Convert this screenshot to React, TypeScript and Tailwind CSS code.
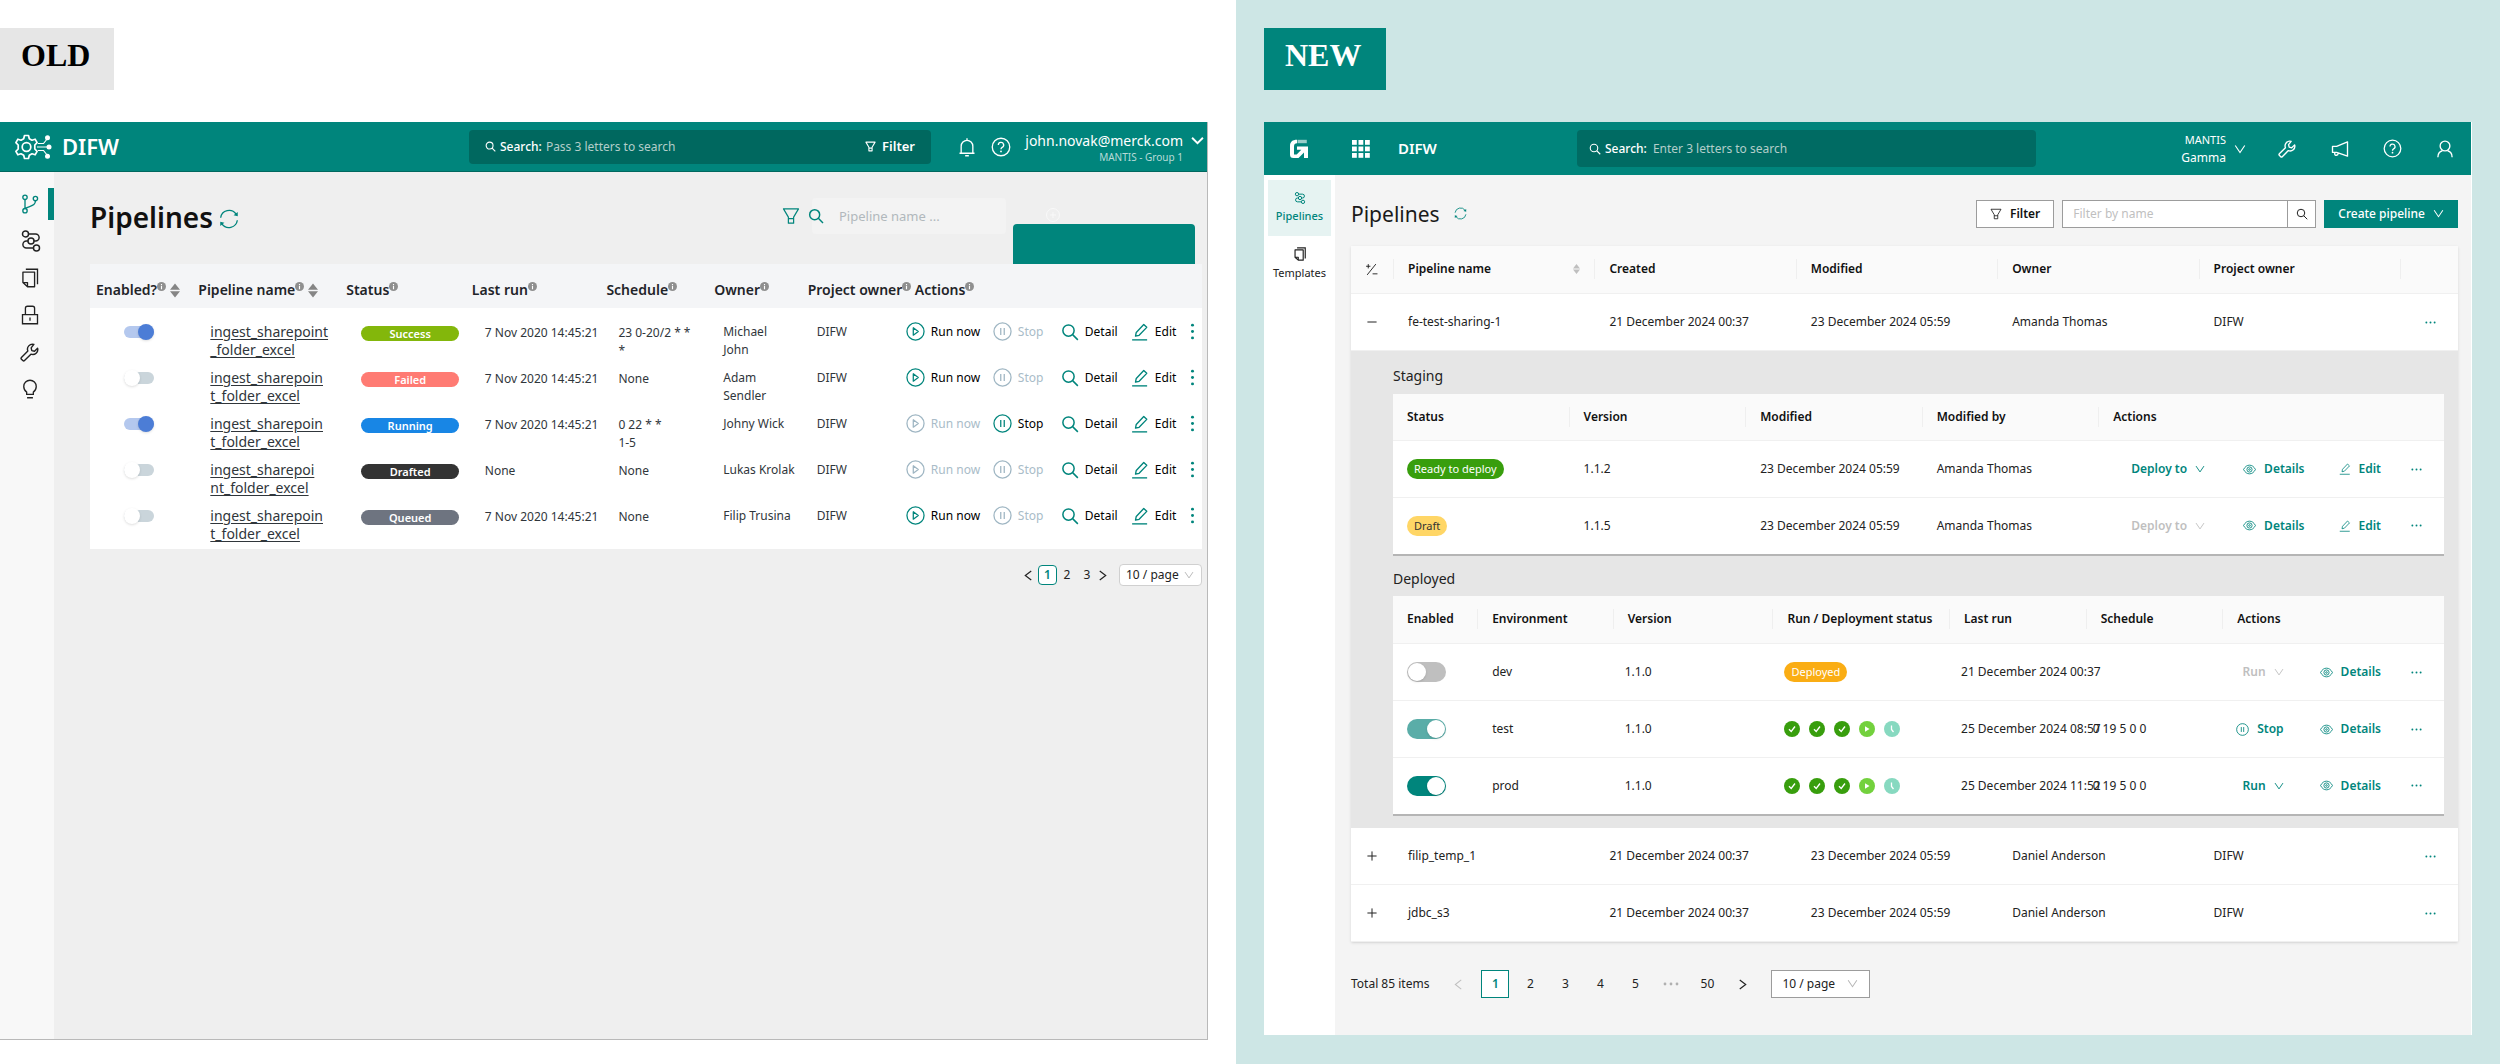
import React from "react";

type IconProps = {
  size?: string;
  className?: string;
  strokeWidth?: number;
  children: React.ReactNode;
};

const Icon = ({ size = "size-4", className = "", strokeWidth = 1.6, children }: IconProps) => (
  <svg
    viewBox="0 0 24 24"
    fill="none"
    stroke="currentColor"
    strokeWidth={strokeWidth}
    className={`shrink-0 ${size} ${className}`}
    aria-hidden="true"
  >
    {children}
  </svg>
);

type SizeProps = { size?: string; className?: string; strokeWidth?: number };

const SearchIcon = (p: SizeProps) => (
  <Icon {...p}>
    <circle cx="10" cy="10" r="7.5" />
    <path d="M15.5 15.5 22.5 22.5" />
  </Icon>
);

const FilterIcon = (p: SizeProps) => (
  <Icon {...p}>
    <path d="M2 2.5h20l-6.5 11v8h-7v-8z M8.5 15.5h7" strokeLinejoin="round" />
  </Icon>
);

const ChevronDown = ({ strokeWidth = 2.2, ...p }: SizeProps) => (
  <Icon strokeWidth={strokeWidth} {...p}>
    <path d="M2.5 5 12 19 21.5 5" />
  </Icon>
);

const RefreshIcon = (p: SizeProps) => (
  <Icon {...p}>
    <path d="M2 10.5A10.2 10.2 0 0 1 20.5 6.2M22 13.5A10.2 10.2 0 0 1 3.5 17.8" />
    <path d="M22.5 3.5v5.2l-5-1.2zM1.5 20.5v-5.2l5 1.2z" fill="currentColor" stroke="none" />
  </Icon>
);

const HelpIcon = (p: SizeProps) => (
  <Icon {...p}>
    <circle cx="12" cy="12" r="10.5" />
    <path d="M8.8 9.6a3.2 3.2 0 1 1 4.6 2.9c-1 .5-1.4 1-1.4 2.2" />
    <circle cx="12" cy="17.3" r="1.1" fill="currentColor" stroke="none" />
  </Icon>
);

const WrenchIcon = (p: SizeProps) => (
  <Icon {...p}>
    <path
      d="M17.5 1.8a6.3 6.3 0 0 0-7.6 8.4L1.8 18.3a1.5 1.5 0 0 0 0 2.1l1.8 1.8a1.5 1.5 0 0 0 2.1 0l8.1-8.1a6.3 6.3 0 0 0 8.4-7.6l-3.9 3.9-3.4-.8-.8-3.4z"
      strokeLinejoin="round"
    />
  </Icon>
);

const PenIcon = (p: SizeProps) => (
  <Icon {...p}>
    <path d="M1.5 22.5h20" />
    <path d="M6 17.5 7 12.6 17 2l4 3.8L10.8 16.4z" strokeLinejoin="round" />
  </Icon>
);

const EyeIcon = (p: SizeProps) => (
  <Icon {...p}>
    <path d="M1 12C4 6.5 7.5 4 12 4s8 2.5 11 8c-3 5.5-6.5 8-11 8S4 17.5 1 12z" />
    <circle cx="12" cy="12" r="4.8" />
    <circle cx="12" cy="12" r="1.5" />
  </Icon>
);

const PauseIcon = (p: SizeProps) => (
  <Icon {...p}>
    <circle cx="12" cy="12" r="10.8" />
    <path d="M9.8 7.5v9M14.2 7.5v9" />
  </Icon>
);

const PlayIcon = (p: SizeProps) => (
  <Icon {...p}>
    <circle cx="12" cy="12" r="10.8" />
    <path d="M9.2 7.3v9.4l6.3-4.7z" strokeLinejoin="round" />
  </Icon>
);

const FlowIcon = (p: SizeProps) => (
  <Icon {...p}>
    <circle cx="6" cy="4.3" r="3.3" />
    <circle cx="12" cy="12" r="3.3" />
    <circle cx="18" cy="19.7" r="3.3" />
    <path d="M9.3 4.3H17a3.8 3.8 0 0 1 0 7.7h-1.7M8.7 12H7a3.8 3.8 0 0 0 0 7.7h7.7" />
  </Icon>
);

const TemplateIcon = (p: SizeProps) => (
  <Icon {...p}>
    <path d="M7 1.5h14v18" />
    <path d="M3.5 5H17.5v17.5H9L3.5 17.5z M3.5 17.5H9v5" strokeLinejoin="round" />
  </Icon>
);

const DotsIcon = (p: SizeProps) => (
  <Icon {...p}>
    <g fill="currentColor" stroke="none">
      <circle cx="3" cy="12" r="2.1" />
      <circle cx="12" cy="12" r="2.1" />
      <circle cx="21" cy="12" r="2.1" />
    </g>
  </Icon>
);

const SortIcon = ({ className = "" }: { className?: string }) => (
  <svg viewBox="0 0 10 14" fill="currentColor" className={`shrink-0 ${className}`} aria-hidden="true">
    <path d="M5 0 10 6.3H0zM5 14 10 7.7H0z" />
  </svg>
);

const InfoMark = () => (
  <svg viewBox="0 0 12 12" className="mb-2 size-[9px] shrink-0" aria-hidden="true">
    <circle cx="6" cy="6" r="6" fill="#8f8f8f" />
    <path d="M6 2.5v1.5M6 5v4.5" stroke="#fff" strokeWidth="1.5" />
  </svg>
);

/* ---------- old app ---------- */

const statusColors: Record<string, string> = {
  Success: "bg-[#83b70b]",
  Failed: "bg-[#ff7b73]",
  Running: "bg-[#1886e5]",
  Drafted: "bg-[#333333]",
  Queued: "bg-[#6e7480]",
};

const oldRows = [
  { on: true, name: ["ingest_sharepoint", "_folder_excel"], status: "Success", lastRun: "7 Nov 2020 14:45:21", schedule: ["23 0-20/2 * *", "*"], owner: ["Michael", "John"], run: true, stop: false },
  { on: false, name: ["ingest_sharepoin", "t_folder_excel"], status: "Failed", lastRun: "7 Nov 2020 14:45:21", schedule: ["None"], owner: ["Adam", "Sendler"], run: true, stop: false },
  { on: true, name: ["ingest_sharepoin", "t_folder_excel"], status: "Running", lastRun: "7 Nov 2020 14:45:21", schedule: ["0 22 * *", "1-5"], owner: ["Johny Wick"], run: false, stop: true },
  { on: false, name: ["ingest_sharepoi", "nt_folder_excel"], status: "Drafted", lastRun: "None", schedule: ["None"], owner: ["Lukas Krolak"], run: false, stop: false },
  { on: false, name: ["ingest_sharepoin", "t_folder_excel"], status: "Queued", lastRun: "7 Nov 2020 14:45:21", schedule: ["None"], owner: ["Filip Trusina"], run: true, stop: false },
];

const Lines = ({ lines }: { lines: string[] }) => (
  <>
    {lines.map((line) => (
      <span key={line} className="block whitespace-nowrap">
        {line}
      </span>
    ))}
  </>
);

const OldHeader = () => (
  <header className="grid h-[50px] grid-cols-[469fr_462fr_276fr] items-center border-b border-[#00685f] bg-[#00857c] text-white">
    <div className="flex items-center gap-2.5 pl-[14px]">
      <svg viewBox="0 0 38 26" fill="none" stroke="currentColor" strokeWidth="1.7" className="h-[26px] w-[38px]" aria-hidden="true">
        <path d="M10.500 1.500h4l.8 3.200 2.700 1.500 3.100-1 2 3.500-2.300 2.300v4l2.300 2.300-2 3.500-3.100-1-2.700 1.500-.8 3.200h-4l-.8-3.200L7 19.800l-3.100 1-2-3.500L4.200 15v-4L1.900 8.700l2-3.500 3.100 1 2.700-1.500z" strokeLinejoin="round" />
        <circle cx="12.5" cy="13" r="4.3" />
        <path d="M24 9.500h5.500l4-5M23 13h12M24 16.500h5.500l4 5" strokeWidth="1.200" />
        <g fill="currentColor" stroke="none">
          <circle cx="33.5" cy="3.800" r="2.500" />
          <circle cx="35" cy="13" r="2.500" />
          <circle cx="33.5" cy="22.200" r="2.500" />
        </g>
      </svg>
      <span className="text-[22px] font-semibold">DIFW</span>
    </div>
    <div className="flex h-[34px] items-center rounded bg-[#00685f] px-4 text-xs">
      <SearchIcon size="size-[11px]" strokeWidth={2.4} />
      <label htmlFor="old-search" className="ml-1 font-medium">
        Search:
      </label>
      <input id="old-search" placeholder="Pass 3 letters to search" className="ml-1 min-w-0 flex-1 bg-transparent outline-none placeholder:text-[#b3ceca]" />
      <button className="flex items-center gap-1.5 text-[13px] font-semibold">
        <FilterIcon size="size-[11px]" strokeWidth={2.4} />
        Filter
      </button>
    </div>
    <div className="flex items-center justify-end pr-[3px]">
      <button aria-label="Notifications">
        <Icon size="size-5">
          <path d="M3 19.5h18M5 19.5V11a7 7 0 0 1 14 0v8.5M12 4V1.5M9.8 22.5h4.4" />
        </Icon>
      </button>
      <button aria-label="Help" className="ml-3.5">
        <HelpIcon size="size-5" />
      </button>
      <div className="ml-3.5 text-right">
        <p className="text-sm leading-5">john.novak@merck.com</p>
        <p className="text-[10px] leading-3 text-[#b8dbd8]">MANTIS - Group 1</p>
      </div>
      <button aria-label="Account menu" className="mb-3 ml-2">
        <Icon size="size-[13px]" strokeWidth={3.5}>
          <path d="M2 7l10 10L22 7" />
        </Icon>
      </button>
    </div>
  </header>
);

const OldSidebar = () => (
  <nav className="flex w-[54px] shrink-0 flex-col gap-[5px] bg-[#f8f8f8] pt-4 text-[#222]">
    <a href="#branches" aria-label="Pipelines" className="flex h-8 items-center border-r-[6px] border-[#00857c] pl-5 text-[#00857c]">
      <Icon size="size-5">
        <circle cx="6" cy="4" r="2.6" />
        <circle cx="6" cy="20" r="2.6" />
        <circle cx="18.5" cy="5.5" r="2.6" />
        <path d="M6 6.6v10.8M18.5 8.2c0 6-5 5.5-12.5 9" />
      </Icon>
    </a>
    <a href="#flows" aria-label="Flows" className="flex h-8 items-center pl-5">
      <FlowIcon size="size-[22px]" />
    </a>
    <a href="#templates" aria-label="Templates" className="flex h-8 items-center pl-5">
      <TemplateIcon size="size-5" />
    </a>
    <a href="#security" aria-label="Security" className="flex h-8 items-center pl-5">
      <Icon size="size-5">
        <path d="M3 11.500h18v11H3zM6.500 11.500V4q0-2.500 2.500-2.500h6q2.500 0 2.500 2.500v7.500M12 15v4" />
      </Icon>
    </a>
    <a href="#tools" aria-label="Tools" className="flex h-8 items-center pl-5">
      <WrenchIcon size="size-[19px]" strokeWidth={1.8} />
    </a>
    <a href="#tips" aria-label="Tips" className="flex h-8 items-center pl-5">
      <Icon size="size-5">
        <path d="M8 18.500v-2.800C5.500 14 4.500 11.500 4.500 9a7.500 7.500 0 0 1 15 0c0 2.500-1 5-3.500 6.700v2.800zM8.500 22.500h7" />
      </Icon>
    </a>
  </nav>
);

type OldActionProps = { icon: React.ReactNode; label: string; width: string; enabled?: boolean };

const OldAction = ({ icon, label, width, enabled = true }: OldActionProps) => (
  <button disabled={!enabled} className={`flex items-center gap-1.5 whitespace-nowrap ${width} ${enabled ? "text-[#00857c]" : "text-[#9fb6c3]"}`}>
    {icon}
    <span className={enabled ? "text-black" : "text-[#a9bcc8]"}>{label}</span>
  </button>
);

const OldTable = () => (
  <table className="w-full table-fixed bg-white text-left text-xs text-[#30363b]">
    <colgroup>
      <col className="w-[9.2%]" />
      <col className="w-[13.3%]" />
      <col className="w-[11.3%]" />
      <col className="w-[12.1%]" />
      <col className="w-[9.7%]" />
      <col className="w-[8.4%]" />
      <col className="w-[9.1%]" />
      <col />
    </colgroup>
    <thead className="bg-[#f4f5f7] text-sm text-[#1f2429]">
      <tr className="h-11">
        {["Enabled?", "Pipeline name", "Status", "Last run", "Schedule", "Owner", "Project owner", "Actions"].map((title, i) => (
          <th key={title} className={`pt-2 pb-0 font-semibold ${i === 7 ? "pl-3" : "pl-1.5"}`}>
            <span className="flex items-center whitespace-nowrap">
              {title}
              <InfoMark />
              {i < 2 && <SortIcon className="ml-1 h-[15px] w-[10px] text-[#858585]" />}
            </span>
          </th>
        ))}
      </tr>
    </thead>
    <tbody className="before:block before:h-1.5 after:block after:h-[5px]">
      {oldRows.map((row) => (
        <tr key={row.status} className="h-[46px] align-top leading-[18px]">
          <td className="pt-2.5 pl-[34px]">
            <input
              type="checkbox"
              role="switch"
              aria-label={`Enable ${row.status} pipeline`}
              defaultChecked={row.on}
              className="relative mt-0.5 block h-3 w-[30px] appearance-none rounded-full bg-[#cad5db] before:absolute before:-top-0.5 before:left-0 before:size-4 before:rounded-full before:bg-white before:shadow checked:bg-[#b4c8ee] checked:before:left-3.5 checked:before:bg-[#4c7dd6]"
            />
          </td>
          <td className="pt-[9px] pl-[18px] text-sm leading-[18px]">
            <a href="#pipeline" className="block underline underline-offset-2">
              <Lines lines={row.name} />
            </a>
          </td>
          <td className="pt-3 pl-[21px]">
            <span className={`block h-[15px] w-[98px] rounded-full text-center text-[11px] leading-[15px] font-semibold text-white ${statusColors[row.status]}`}>{row.status}</span>
          </td>
          <td className="pt-2.5 pl-[19px] whitespace-nowrap">{row.lastRun}</td>
          <td className="pt-2.5 pl-[18px]">
            <Lines lines={row.schedule} />
          </td>
          <td className="pt-[9px] pl-[15px]">
            <Lines lines={row.owner} />
          </td>
          <td className="pt-[9px] pl-[15px]">DIFW</td>
          <td className="pt-2 pl-[3px]">
            <div className="flex items-center">
              <OldAction icon={<PlayIcon size="size-[19px]" />} label="Run now" width="w-[87px]" enabled={row.run} />
              <OldAction icon={<PauseIcon size="size-[19px]" />} label="Stop" width="w-[68px]" enabled={row.stop} />
              <OldAction icon={<SearchIcon size="size-[18px]" strokeWidth={2} />} label="Detail" width="w-[70px]" />
              <OldAction icon={<PenIcon size="size-[18px]" strokeWidth={1.8} />} label="Edit" width="w-[53px]" />
              <button aria-label="More" className="text-[#00857c]">
                <DotsIcon size="size-[17px]" className="rotate-90" />
              </button>
            </div>
          </td>
        </tr>
      ))}
    </tbody>
  </table>
);

const OldApp = () => (
  <div className="mr-7 flex flex-1 flex-col border-r border-b border-[#b9b9b9]">
    <OldHeader />
    <div className="flex flex-1 bg-[#efefef]">
      <OldSidebar />
      <main className="min-w-0 flex-1 pr-[5px] pl-9">
        <div className="flex h-[92px] items-start">
          <h1 className="mt-[25px] text-[28px] leading-10 font-semibold text-[#111]">Pipelines</h1>
          <button aria-label="Refresh" className="mt-[37px] ml-1.5 text-[#00857c]">
            <RefreshIcon size="size-5" />
          </button>
          <div className="mt-[26px] ml-auto flex items-center text-[#00857c]">
            <button aria-label="Filter">
              <FilterIcon size="size-[18px]" />
            </button>
            <label htmlFor="old-name" aria-label="Pipeline name" className="z-10 -mr-3 ml-2">
              <SearchIcon size="size-4" strokeWidth={2.2} />
            </label>
            <input id="old-name" placeholder="Pipeline name ..." className="h-9 w-[194px] rounded bg-[#f3f3f3] pl-[27px] text-[13px] outline-none placeholder:text-[#b1b8bc]" />
          </div>
          <button aria-label="Add pipeline" className="relative mt-[52px] mr-[7px] ml-[7px] h-10 w-[182px] rounded-t bg-[#00857c]">
            <Icon size="size-[14px]" className="absolute -top-4 left-[33px] text-[#fafafa]">
              <circle cx="12" cy="12" r="11" />
              <path d="M12 7v10M7 12h10" />
            </Icon>
          </button>
        </div>
        <OldTable />
        <div className="mt-[15px] flex items-center justify-end text-xs text-[#222]">
          <button aria-label="Previous page">
            <Icon size="size-[11px]" strokeWidth={2.6}>
              <path d="M18 2 5 12l13 10" />
            </Icon>
          </button>
          <button className="ml-1 h-5 w-[19px] rounded border border-[#00857c] bg-white font-semibold text-[#00857c]">1</button>
          <button className="w-5">2</button>
          <button className="w-5">3</button>
          <button aria-label="Next page">
            <Icon size="size-[11px]" strokeWidth={2.6}>
              <path d="M6 2l13 10L6 22" />
            </Icon>
          </button>
          <div className="relative ml-[11px]">
            <select aria-label="Page size" className="h-[22px] w-[83px] appearance-none rounded border border-[#d0d0d0] bg-white pl-1.5">
              <option>10 / page</option>
            </select>
            <ChevronDown size="size-[10px]" className="pointer-events-none absolute top-1.5 right-2 text-[#b5b5b5]" />
          </div>
        </div>
      </main>
    </div>
  </div>
);

/* ---------- new app ---------- */

const NewHeader = () => (
  <header className="grid h-[53px] grid-cols-[313fr_459fr_435fr] items-center bg-[#00857c] text-white">
    <div className="flex items-center pl-[25px]">
      <svg viewBox="0 0 20 20" fill="currentColor" className="size-5" aria-hidden="true">
        <path d="M8 .8C3.500.8 1 2.800 1 7v8.500C1 18 2 19 4.500 19h5l5.500-5.500V19h4V7.500H8v3.300h4.300l-4.600 4.700H5V7.500C5 5.500 6 4.300 8 4.300z" />
        <path d="M8.500.8h9.300v3.400H8.500z" opacity=".6" />
      </svg>
      <button aria-label="Apps" className="ml-[43px]">
        <svg viewBox="0 0 18 18" fill="currentColor" className="size-[18px]" aria-hidden="true">
          {[0, 6.5, 13].map((y) => [0, 6.5, 13].map((x) => <rect key={`${x}-${y}`} x={x} y={y} width="4.8" height="4.8" />))}
        </svg>
      </button>
      <span className="ml-7 text-[15px] font-semibold">DIFW</span>
    </div>
    <div className="flex h-[37px] items-center rounded bg-[#006b63] px-3 text-xs">
      <SearchIcon size="size-3" strokeWidth={2.2} />
      <label htmlFor="new-search" className="ml-1 font-medium">
        Search:
      </label>
      <input id="new-search" placeholder="Enter 3 letters to search" className="ml-1.5 min-w-0 flex-1 bg-transparent outline-none placeholder:text-[#b3ceca]" />
    </div>
    <div className="flex items-center justify-end pr-[17px]">
      <button className="flex items-center gap-2 text-right">
        <span>
          <span className="block text-[11px] leading-[18px]">MANTIS</span>
          <span className="block text-xs leading-[18px]">Gamma</span>
        </span>
        <ChevronDown size="size-3" />
      </button>
      <button aria-label="Tools" className="ml-8">
        <WrenchIcon size="size-[18px]" strokeWidth={1.8} />
      </button>
      <button aria-label="Announcements" className="ml-[35px]">
        <Icon size="size-[18px]" strokeWidth={1.8}>
          <path d="M22 2.500v19L7.500 16.500H2v-8h5.500zM5 16.500v2.500c0 2 4.500 2 4.500-1.500" strokeLinejoin="round" />
        </Icon>
      </button>
      <button aria-label="Help" className="ml-[34px]">
        <HelpIcon size="size-[19px]" />
      </button>
      <button aria-label="Account" className="ml-[34px]">
        <Icon size="size-[18px]" strokeWidth={1.8}>
          <circle cx="12" cy="8" r="6.5" />
          <path d="M2.500 23c0-5 3-8 6-8.700M21.500 23c0-5-3-8-6-8.700" />
        </Icon>
      </button>
    </div>
  </header>
);

const NewSidebar = () => (
  <nav className="flex w-[71px] shrink-0 flex-col bg-white px-1 pt-[5px] text-[11px]">
    <a href="#pipelines" className="flex h-14 flex-col items-center justify-center gap-1 bg-[#e6f3f2] leading-4 font-medium text-[#00857c]">
      <FlowIcon size="size-3" strokeWidth={2} />
      Pipelines
    </a>
    <a href="#templates" className="flex h-14 flex-col items-center justify-center gap-1 leading-4 text-[#222]">
      <TemplateIcon size="size-[14px]" strokeWidth={2} />
      Templates
    </a>
  </nav>
);

const Th = ({ children, last = false }: { children?: React.ReactNode; last?: boolean }) => (
  <th className="p-0 font-semibold">
    <div className={`flex h-5 items-center justify-between pl-3.5 whitespace-nowrap ${last ? "" : "border-r border-[#efefef]"}`}>{children}</div>
  </th>
);

type LinkButtonProps = { className?: string; disabled?: boolean; children: React.ReactNode };

const LinkButton = ({ className = "", disabled = false, children }: LinkButtonProps) => (
  <button disabled={disabled} className={`flex items-center gap-2 font-semibold whitespace-nowrap ${disabled ? "text-[#bfbfbf]" : "text-[#00857c]"} ${className}`}>
    {children}
  </button>
);

const DetailsButton = ({ className = "" }: { className?: string }) => (
  <LinkButton className={className}>
    <EyeIcon size="size-[13px]" />
    Details
  </LinkButton>
);

const MoreButton = ({ className = "" }: { className?: string }) => (
  <button aria-label="More" className={`text-[#00857c] ${className}`}>
    <DotsIcon size="size-[11px]" />
  </button>
);

const staging = [
  { status: "Ready to deploy", color: "bg-[#389e0d] text-white", version: "1.1.2", disabled: false },
  { status: "Draft", color: "bg-[#ffd666] text-[#333]", version: "1.1.5", disabled: true },
];

const StagingTable = () => (
  <table className="w-full table-fixed border-b-2 border-[#b5b5b5] bg-white text-left">
    <colgroup>
      <col className="w-[16.8%]" />
      <col className="w-[16.8%]" />
      <col className="w-[16.8%]" />
      <col className="w-[16.8%]" />
      <col />
    </colgroup>
    <thead className="bg-[#fafafa] text-[#111]">
      <tr className="h-[47px] border-b border-[#f0f0f0]">
        <Th>Status</Th>
        <Th>Version</Th>
        <Th>Modified</Th>
        <Th>Modified by</Th>
        <Th last>Actions</Th>
      </tr>
    </thead>
    <tbody>
      {staging.map((row) => (
        <tr key={row.version} className="h-[57px] border-b border-[#f0f0f0] last:border-0">
          <td className="pl-3.5">
            <span className={`inline-block rounded-full px-[7px] text-[11px] leading-5 ${row.color}`}>{row.status}</span>
          </td>
          <td className="pl-3.5">{row.version}</td>
          <td className="pl-3.5">23 December 2024 05:59</td>
          <td className="pl-3.5">Amanda Thomas</td>
          <td className="pr-[22px]">
            <div className="flex items-center justify-end">
              <LinkButton disabled={row.disabled}>
                Deploy to
                <ChevronDown size="size-[10px]" />
              </LinkButton>
              <DetailsButton className="ml-[38px]" />
              <LinkButton className="ml-[34px]">
                <PenIcon size="size-3" />
                Edit
              </LinkButton>
              <MoreButton className="ml-[30px]" />
            </div>
          </td>
        </tr>
      ))}
    </tbody>
  </table>
);

const RunStates = () => (
  <div className="flex gap-[9px]">
    {["done-1", "done-2", "done-3", "running", "waiting"].map((state) => (
      <svg key={state} viewBox="0 0 16 16" className="size-4" aria-hidden="true">
        {state.startsWith("done") && (
          <>
            <circle cx="8" cy="8" r="8" fill="#389e0d" />
            <path d="M5 8.2 7.2 10.5 11 5.5" fill="none" stroke="#fff" strokeWidth="1.3" />
          </>
        )}
        {state === "running" && (
          <>
            <circle cx="8" cy="8" r="8" fill="#73d13d" />
            <path d="M6 5.2v5.6L10.5 8z" fill="#fff" />
          </>
        )}
        {state === "waiting" && (
          <>
            <circle cx="8" cy="8" r="8" fill="#87d9c0" />
            <path d="M7.5 4.5v4l2 2.5" fill="none" stroke="#fff" strokeWidth="1.3" />
          </>
        )}
      </svg>
    ))}
  </div>
);

const deployed = [
  { env: "dev", on: false, color: "checked:bg-[#00857c]", lastRun: "21 December 2024 00:37", schedule: "", action: "idle" },
  { env: "test", on: true, color: "checked:bg-[#5aada8]", lastRun: "25 December 2024 08:57", schedule: "0 19 5 0 0", action: "stop" },
  { env: "prod", on: true, color: "checked:bg-[#00857c]", lastRun: "25 December 2024 11:52", schedule: "0 19 5 0 0", action: "run" },
];

const DeployedTable = () => (
  <table className="w-full table-fixed border-b-2 border-[#b5b5b5] bg-white text-left">
    <colgroup>
      <col className="w-[8.1%]" />
      <col className="w-[12.9%]" />
      <col className="w-[15.2%]" />
      <col className="w-[16.8%]" />
      <col className="w-[13%]" />
      <col className="w-[13%]" />
      <col />
    </colgroup>
    <thead className="bg-[#fafafa] text-[#111]">
      <tr className="h-12 border-b border-[#f0f0f0]">
        <Th>Enabled</Th>
        <Th>Environment</Th>
        <Th>Version</Th>
        <Th>Run / Deployment status</Th>
        <Th>Last run</Th>
        <Th>Schedule</Th>
        <Th last>Actions</Th>
      </tr>
    </thead>
    <tbody>
      {deployed.map((row) => (
        <tr key={row.env} className="h-[57px] border-b border-[#f0f0f0] last:border-0">
          <td className="pl-3.5">
            <input
              type="checkbox"
              role="switch"
              aria-label={`Enable ${row.env}`}
              defaultChecked={row.on}
              className={`relative block h-5 w-[39px] appearance-none rounded-full bg-[#bfbfbf] before:absolute before:top-px before:left-px before:size-[18px] before:rounded-full before:bg-white before:shadow checked:before:left-5 ${row.color}`}
            />
          </td>
          <td className="pl-3.5">{row.env}</td>
          <td className="pl-[11px]">1.1.0</td>
          <td className="pl-[11px]">
            {row.env === "dev" ? (
              <span className="inline-block rounded-full bg-[#faad14] px-[7px] text-[11px] leading-5 text-white">Deployed</span>
            ) : (
              <RunStates />
            )}
          </td>
          <td className="pl-[11px] whitespace-nowrap">{row.lastRun}</td>
          <td className="pl-1.5">{row.schedule}</td>
          <td className="pr-[22px]">
            <div className="flex items-center justify-end">
              {row.action === "stop" ? (
                <LinkButton>
                  <PauseIcon size="size-[13px]" />
                  Stop
                </LinkButton>
              ) : (
                <LinkButton disabled={row.action === "idle"}>
                  Run
                  <ChevronDown size="size-[10px]" />
                </LinkButton>
              )}
              <DetailsButton className="ml-9" />
              <MoreButton className="ml-[30px]" />
            </div>
          </td>
        </tr>
      ))}
    </tbody>
  </table>
);

const pipelines = [
  { name: "fe-test-sharing-1", owner: "Amanda Thomas", open: true },
  { name: "filip_temp_1", owner: "Daniel Anderson", open: false },
  { name: "jdbc_s3", owner: "Daniel Anderson", open: false },
];

const PipelineTable = () => (
  <table className="w-full table-fixed bg-white text-left text-xs text-[#222] shadow-sm">
    <colgroup>
      <col className="w-[43px]" />
      <col />
      <col />
      <col />
      <col />
      <col />
      <col className="w-[57px]" />
    </colgroup>
    <thead className="bg-[#fafafa] text-[#111]">
      <tr className="h-[47px] border-b border-[#f0f0f0]">
        <Th>
          <Icon size="size-[13px]">
            <path d="M2 6h8M6 2v8M20 2 4 22M14 20h9" />
          </Icon>
        </Th>
        <Th>
          Pipeline name
          <SortIcon className="mr-3.5 h-[10px] w-[7px] text-[#bfbfbf]" />
        </Th>
        <Th>Created</Th>
        <Th>Modified</Th>
        <Th>Owner</Th>
        <Th>Project owner</Th>
        <Th last />
      </tr>
    </thead>
    <tbody>
      {pipelines.map((row) => (
        <React.Fragment key={row.name}>
          <tr className="h-[57px] border-b border-[#f0f0f0]">
            <td className="pl-4">
              <button aria-label={row.open ? "Collapse" : "Expand"} className="block">
                <Icon size="size-[10px]" strokeWidth={2.4}>
                  <path d={row.open ? "M1 12h22" : "M1 12h22M12 1v22"} />
                </Icon>
              </button>
            </td>
            <td className="pl-3.5">{row.name}</td>
            <td className="pl-3.5">21 December 2024 00:37</td>
            <td className="pl-3.5">23 December 2024 05:59</td>
            <td className="pl-3.5">{row.owner}</td>
            <td className="pl-3.5">DIFW</td>
            <td className="pr-[22px] text-right">
              <MoreButton className="align-middle" />
            </td>
          </tr>
          {row.open && (
            <tr>
              <td colSpan={7} className="bg-[#e6e6e6] py-3 pr-[14px] pl-[42px]">
                <h2 className="pb-[5px] text-sm leading-[26px]">Staging</h2>
                <StagingTable />
                <h2 className="pt-2.5 pb-1 text-sm leading-[26px]">Deployed</h2>
                <DeployedTable />
              </td>
            </tr>
          )}
        </React.Fragment>
      ))}
    </tbody>
  </table>
);

const NewPagination = () => (
  <div className="mt-7 flex items-center text-xs text-[#222]">
    <span>Total 85 items</span>
    <button aria-label="Previous page" disabled className="ml-6 text-[#bfbfbf]">
      <Icon size="size-[11px]" strokeWidth={2.2}>
        <path d="M18 2 5 12l13 10" />
      </Icon>
    </button>
    <button className="ml-[17px] h-7 w-7 border border-[#00857c] bg-white font-semibold text-[#00857c]">1</button>
    {["2", "3", "4", "5"].map((page) => (
      <button key={page} className="ml-[7px] w-7">
        {page}
      </button>
    ))}
    <span className="ml-2 flex w-7 justify-center text-[#b0b0b0]">
      <DotsIcon size="size-4" />
    </span>
    <button className="ml-2 w-7">50</button>
    <button aria-label="Next page" className="ml-4">
      <Icon size="size-[11px]" strokeWidth={2.6}>
        <path d="M6 2l13 10L6 22" />
      </Icon>
    </button>
    <div className="relative ml-[23px]">
      <select aria-label="Page size" className="h-7 w-[99px] appearance-none border border-[#9c9c9c] bg-white pl-2.5">
        <option>10 / page</option>
      </select>
      <ChevronDown size="size-[11px]" className="pointer-events-none absolute top-2 right-3 text-[#b5b5b5]" />
    </div>
  </div>
);

const NewApp = () => (
  <div className="mx-7 flex flex-1 flex-col border-r border-white bg-[#f4f4f4]">
    <NewHeader />
    <div className="flex flex-1">
      <NewSidebar />
      <main className="min-w-0 flex-1 pr-[13px] pb-9 pl-4">
        <div className="flex h-[71px] items-center gap-2 pt-1.5">
          <h1 className="text-[21px] leading-8 text-[#1a1a1a]">Pipelines</h1>
          <button aria-label="Refresh" className="ml-1.5 text-[#00857c]">
            <RefreshIcon size="size-[13px]" />
          </button>
          <button className="ml-auto flex h-7 items-center gap-2 border border-[#9c9c9c] bg-white px-[13px] text-xs font-semibold text-[#111]">
            <FilterIcon size="size-3" />
            Filter
          </button>
          <div className="flex h-7 w-[254px] border border-[#9c9c9c] bg-white text-xs">
            <input aria-label="Filter by name" placeholder="Filter by name" className="min-w-0 flex-1 px-2.5 outline-none placeholder:text-[#bfbfbf]" />
            <button aria-label="Search" className="flex w-7 items-center justify-center border-l border-[#9c9c9c] text-[#222]">
              <SearchIcon size="size-3" strokeWidth={2} />
            </button>
          </div>
          <button className="flex h-7 items-center gap-2 bg-[#00857c] px-3.5 text-xs font-medium whitespace-nowrap text-white">
            Create pipeline
            <ChevronDown size="size-[11px]" />
          </button>
        </div>
        <PipelineTable />
        <NewPagination />
      </main>
    </div>
  </div>
);

const App = () => (
  <div className="flex min-h-screen bg-white font-['Noto_Sans',sans-serif]">
    <section className="flex w-[49.44%] shrink-0 flex-col pt-7 pb-6">
      <h2 className="mb-8 flex h-[62px] w-[114px] items-center bg-[#e6e6e6] pb-2 pl-[21px] font-['Liberation_Serif',serif] text-[32px] font-bold text-black">OLD</h2>
      <OldApp />
    </section>
    <section className="flex min-w-0 flex-1 flex-col bg-[#cde6e5] pt-7 pb-[29px]">
      <h2 className="mb-8 ml-7 flex h-[62px] w-[122px] items-center bg-[#00857c] pb-2 pl-[21px] font-['Liberation_Serif',serif] text-[32px] font-bold text-white">NEW</h2>
      <NewApp />
    </section>
  </div>
);

export default App;
